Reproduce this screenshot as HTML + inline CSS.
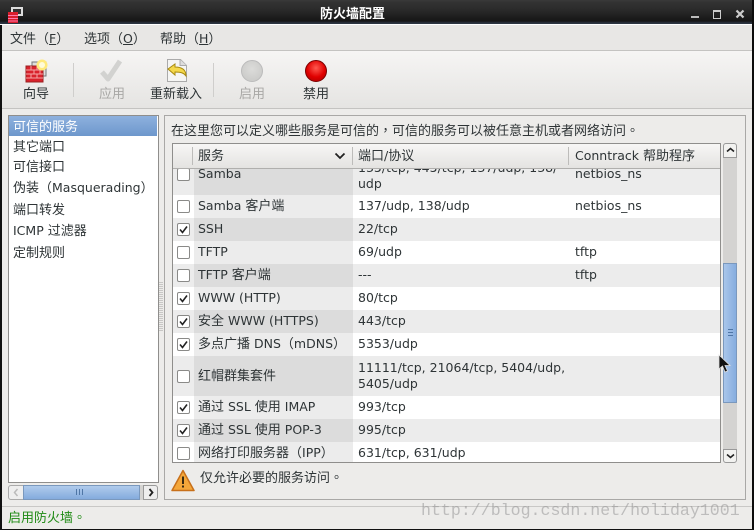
<!DOCTYPE html>
<html><head><meta charset="utf-8">
<style>
html,body{margin:0;padding:0;background:#000}
#w{position:relative;width:754px;height:530px;overflow:hidden;background:#edecea;font-family:"Liberation Sans","DejaVu Sans","WenQuanYi Zen Hei","Noto Sans CJK SC",sans-serif;font-size:13px;color:#2e3436}
.a{position:absolute;white-space:nowrap}
.t{font-family:"DejaVu Sans","WenQuanYi Zen Hei","Noto Sans CJK SC",sans-serif;font-size:12.5px;line-height:16px;white-space:nowrap;position:absolute}
.t i{font-style:normal;font-size:13px}
.t b{font-weight:normal;font-size:13px;font-family:"Noto Sans CJK TC",sans-serif;line-height:16px}
.r{position:absolute;left:173px;width:547px}
.c{position:absolute;left:177px;width:11px;height:11px;border:1px solid #8a8a88;border-radius:2px;background:#fff;font-size:0}
.c svg{position:absolute;left:1px;top:1px}
u{text-decoration:underline}
</style></head><body>
<div id="w">
<!-- title bar -->
<div class="a" style="left:0;top:0;width:754px;height:24px;background:linear-gradient(#3a3a3a 0,#333 2px,#2a2a2a 10px,#161616 21px,#2b3440 23px)"></div>
<div class="a" style="left:0;top:24px;width:754px;height:1px;background:#fff"></div>
<div class="a" style="left:0;top:25px;width:2px;height:505px;background:#111"></div>
<div class="a" style="left:752px;top:0;width:2px;height:530px;background:#0c0c0c"></div>
<div class="a" style="left:0;top:529px;width:754px;height:1px;background:#111"></div>
<svg class="a" style="left:6px;top:6px" width="18" height="18" viewBox="0 0 18 18"><rect x="5" y="1" width="12" height="9" fill="#ddd"/><rect x="7" y="3" width="8" height="5" fill="#333"/><rect x="2" y="6" width="10" height="11" fill="#d81e2c"/><path d="M2 9.500h10M2 12.500h10M2 15h10" stroke="#f7a" stroke-width="1"/></svg>
<div class="t" style="left:320px;top:7px;color:#fff;font-weight:bold;font-size:13px">防火墙配置</div>
<div class="a" style="left:691px;top:16px;width:8px;height:2px;background:#bbb"></div>
<div class="a" style="left:713px;top:10px;width:6px;height:6px;border:1px solid #ccc;border-top-width:2px"></div>
<svg class="a" style="left:735px;top:9px" width="10" height="10"><path d="M1.500 1.500L8.500 8.500M8.500 1.500L1.500 8.500" stroke="#ccc" stroke-width="2.200"/></svg>

<!-- menu -->
<div class="a" style="left:2px;top:25px;width:750px;height:25px;background:#e8e7e5"></div>
<div class="a" style="left:2px;top:50px;width:750px;height:1px;background:#c4c3c1"></div>
<div class="t" style="left:10px;top:31px"><i>文件（</i><u>F</u><i>）</i></div>
<div class="t" style="left:84px;top:31px"><i>选项（</i><u>O</u><i>）</i></div>
<div class="t" style="left:160px;top:31px"><i>帮助（</i><u>H</u><i>）</i></div>

<!-- toolbar -->
<div class="a" style="left:2px;top:51px;width:750px;height:57px;background:linear-gradient(#f6f5f4,#e5e4e2)"></div>
<div class="a" style="left:2px;top:108px;width:750px;height:1px;background:#c4c3c1"></div>
<div class="a" style="left:73px;top:63px;width:1px;height:34px;background:#cfcecc"></div>
<div class="a" style="left:213px;top:63px;width:1px;height:34px;background:#cfcecc"></div>
<svg class="a" style="left:24px;top:58px" width="26" height="26" viewBox="0 0 26 26"><rect x="8" y="4" width="14" height="14" fill="#ddd" stroke="#777"/><rect x="2" y="8" width="17" height="16" fill="#d9222c" stroke="#922"/><path d="M2 12h17M2 16h17M2 20h17M7 8v4M13 8v4M10 12v4M16 12v4M7 16v4M13 16v4" stroke="#f5a5a5"/><circle cx="18" cy="7" r="5.500" fill="#ffe97a"/><circle cx="18" cy="7" r="3" fill="#fffbd8"/></svg>
<div class="t" style="left:23px;top:86px"><i>向导</i></div>
<svg class="a" style="left:97px;top:58px" width="28" height="26" viewBox="0 0 28 26"><path d="M5 14l6 7L23 3" fill="none" stroke="#d2d2d0" stroke-width="5" stroke-linejoin="round"/></svg>
<div class="t" style="left:99px;top:86px;color:#a8a7a5"><i>应用</i></div>
<svg class="a" style="left:165px;top:58px" width="24" height="25" viewBox="0 0 24 25"><path d="M2.500 1.500h13l6 6v16h-19z" fill="#f5f5f3" stroke="#aaa"/><path d="M15 1.500v6h6.500" fill="#ddd" stroke="#aaa"/><path d="M3 11l7-5v3c6 0 11 2 11 9-2-3-5-4-11-4v3z" fill="#f4d84a" stroke="#a88a10"/></svg>
<div class="t" style="left:150px;top:86px"><i>重新载入</i></div>
<div class="a" style="left:241px;top:60px;width:20px;height:20px;border:1px solid #bbb;border-radius:50%;background:radial-gradient(circle at 50% 40%,#dcdcda,#c6c6c4)"></div>
<div class="t" style="left:239px;top:86px;color:#a8a7a5"><i>启用</i></div>
<div class="a" style="left:305px;top:60px;width:20px;height:20px;border:1px solid #7a0000;border-radius:50%;background:radial-gradient(circle at 50% 35%,#ff5a50,#e00000 55%,#a80000)"></div>
<div class="t" style="left:303px;top:86px"><i>禁用</i></div>

<!-- left list -->
<div class="a" style="left:8px;top:115px;width:149px;height:366px;background:#fff;border:1px solid #8f8e8c"></div>
<div class="a" style="left:9px;top:116px;width:148px;height:20px;background:linear-gradient(#8eb1de,#6d97cc)"></div>
<div class="t" style="left:13px;top:119px;color:#fff"><i>可信的服务</i></div>
<div class="t" style="left:13px;top:139px"><i>其它端口</i></div>
<div class="t" style="left:13px;top:159px"><i>可信接口</i></div>
<div class="t" style="left:13px;top:180px"><i>伪装（</i>Masquerading<i>）</i></div>
<div class="t" style="left:13px;top:202px"><i>端口转发</i></div>
<div class="t" style="left:13px;top:223px">ICMP <i>过滤器</i></div>
<div class="t" style="left:13px;top:245px"><i>定制规则</i></div>
<!-- left hscroll -->
<div class="a" style="left:8px;top:485px;width:150px;height:15px;background:#d4d3d1;border-radius:3px"></div>
<div class="a" style="left:8px;top:485px;width:14px;height:13px;border:1px solid #aaa;border-radius:3px 0 0 3px;background:#eee"></div>
<div class="a" style="left:23px;top:485px;width:115px;height:13px;border:1px solid #7a98bd;background:linear-gradient(#b0cbec,#84abdd)"></div>
<div class="a" style="left:143px;top:485px;width:13px;height:13px;border:1px solid #999;border-radius:0 3px 3px 0;background:#eee"></div>
<svg class="a" style="left:12px;top:488px" width="8" height="9"><path d="M5.500 1L2.500 4.500 5.500 8" stroke="#bbb" fill="none" stroke-width="1.500"/></svg>
<svg class="a" style="left:147px;top:488px" width="8" height="9"><path d="M2.500 1L5.500 4.500 2.500 8" stroke="#222" fill="none" stroke-width="1.800"/></svg>
<div class="a" style="left:76px;top:489px;width:7px;height:6px;background:repeating-linear-gradient(90deg,#4f76a6 0 1px,transparent 1px 3px)"></div>
<div class="a" style="left:159px;top:282px;width:4px;height:50px;background:repeating-linear-gradient(#c8c7c5 0 1px,transparent 1px 2px)"></div>

<!-- right frame -->
<div class="a" style="left:164px;top:115px;width:580px;height:383px;border:1px solid #a9a8a6"></div>
<div class="t" style="left:171px;top:122px"><i>在这里您可以定义哪些服务是可信的</i><b>，</b><i>可信的服务可以被任意主机或者网络访问</i><b>。</b></div>

<!-- table -->
<div class="a" style="left:172px;top:143px;width:547px;height:319px;border:1px solid #8f8e8c;background:#fff"></div>
<div class="a" style="left:173px;top:144px;width:547px;height:24px;background:linear-gradient(#f7f6f5,#e4e3e1);z-index:3;border-bottom:1px solid #b0afad"></div>
<div class="a" style="left:192px;top:147px;width:1px;height:18px;background:#bdbcba;z-index:4"></div>
<div class="a" style="left:352px;top:147px;width:1px;height:18px;background:#bdbcba;z-index:4"></div>
<div class="a" style="left:568px;top:147px;width:1px;height:18px;background:#bdbcba;z-index:4"></div>
<div class="t" style="left:198px;top:148px;z-index:4"><i>服务</i></div>
<svg class="a" style="left:334px;top:152px;z-index:4" width="12" height="8"><path d="M1.500 1.500L6 6 10.500 1.500" stroke="#222" fill="none" stroke-width="1.800"/></svg>
<div class="t" style="left:358px;top:148px;z-index:4"><i>端口</i>/<i>协议</i></div>
<div class="t" style="left:575px;top:148px;z-index:4">Conntrack <i>帮助程序</i></div>

<!-- rows -->
<div class="r" style="top:169px;height:26px;background:#ececec"></div><div class="a" style="left:194px;top:169px;width:159px;height:26px;background:#dcdcdc"></div>
<div class="r" style="top:195px;height:23px;background:#fff"></div><div class="a" style="left:194px;top:195px;width:159px;height:23px;background:#ececec"></div>
<div class="r" style="top:218px;height:23px;background:#ececec"></div><div class="a" style="left:194px;top:218px;width:159px;height:23px;background:#dcdcdc"></div>
<div class="r" style="top:241px;height:23px;background:#fff"></div><div class="a" style="left:194px;top:241px;width:159px;height:23px;background:#ececec"></div>
<div class="r" style="top:264px;height:23px;background:#ececec"></div><div class="a" style="left:194px;top:264px;width:159px;height:23px;background:#dcdcdc"></div>
<div class="r" style="top:287px;height:23px;background:#fff"></div><div class="a" style="left:194px;top:287px;width:159px;height:23px;background:#ececec"></div>
<div class="r" style="top:310px;height:23px;background:#ececec"></div><div class="a" style="left:194px;top:310px;width:159px;height:23px;background:#dcdcdc"></div>
<div class="r" style="top:333px;height:23px;background:#fff"></div><div class="a" style="left:194px;top:333px;width:159px;height:23px;background:#ececec"></div>
<div class="r" style="top:356px;height:40px;background:#ececec"></div><div class="a" style="left:194px;top:356px;width:159px;height:40px;background:#dcdcdc"></div>
<div class="r" style="top:396px;height:23px;background:#fff"></div><div class="a" style="left:194px;top:396px;width:159px;height:23px;background:#ececec"></div>
<div class="r" style="top:419px;height:23px;background:#ececec"></div><div class="a" style="left:194px;top:419px;width:159px;height:23px;background:#dcdcdc"></div>
<div class="r" style="top:442px;height:20px;background:#fff"></div><div class="a" style="left:194px;top:442px;width:159px;height:20px;background:#ececec"></div>

<div class="c" style="top:168px"></div>
<div class="c" style="top:200px"></div>
<div class="c" style="top:223px"><svg width="9" height="9"><path d="M1 4.500L3.500 7.500 8 1.500" stroke="#222" fill="none" stroke-width="1.600"/></svg></div>
<div class="c" style="top:246px"></div>
<div class="c" style="top:269px"></div>
<div class="c" style="top:292px"><svg width="9" height="9"><path d="M1 4.500L3.500 7.500 8 1.500" stroke="#222" fill="none" stroke-width="1.600"/></svg></div>
<div class="c" style="top:315px"><svg width="9" height="9"><path d="M1 4.500L3.500 7.500 8 1.500" stroke="#222" fill="none" stroke-width="1.600"/></svg></div>
<div class="c" style="top:338px"><svg width="9" height="9"><path d="M1 4.500L3.500 7.500 8 1.500" stroke="#222" fill="none" stroke-width="1.600"/></svg></div>
<div class="c" style="top:370px"></div>
<div class="c" style="top:401px"><svg width="9" height="9"><path d="M1 4.500L3.500 7.500 8 1.500" stroke="#222" fill="none" stroke-width="1.600"/></svg></div>
<div class="c" style="top:424px"><svg width="9" height="9"><path d="M1 4.500L3.500 7.500 8 1.500" stroke="#222" fill="none" stroke-width="1.600"/></svg></div>
<div class="c" style="top:447px"></div>

<div class="t" style="left:198px;top:166px">Samba</div>
<div class="t" style="left:358px;top:160px">135/tcp, 445/tcp, 137/udp, 138/</div>
<div class="t" style="left:358px;top:176px">udp</div>
<div class="t" style="left:575px;top:166px">netbios_ns</div>
<div class="t" style="left:198px;top:198px">Samba <i>客户端</i></div>
<div class="t" style="left:358px;top:198px">137/udp, 138/udp</div>
<div class="t" style="left:575px;top:198px">netbios_ns</div>
<div class="t" style="left:198px;top:221px">SSH</div>
<div class="t" style="left:358px;top:221px">22/tcp</div>
<div class="t" style="left:198px;top:244px">TFTP</div>
<div class="t" style="left:358px;top:244px">69/udp</div>
<div class="t" style="left:575px;top:244px">tftp</div>
<div class="t" style="left:198px;top:267px">TFTP <i>客户端</i></div>
<div class="t" style="left:358px;top:267px">---</div>
<div class="t" style="left:575px;top:267px">tftp</div>
<div class="t" style="left:198px;top:290px">WWW (HTTP)</div>
<div class="t" style="left:358px;top:290px">80/tcp</div>
<div class="t" style="left:198px;top:313px"><i>安全</i> WWW (HTTPS)</div>
<div class="t" style="left:358px;top:313px">443/tcp</div>
<div class="t" style="left:198px;top:336px"><i>多点广播</i> DNS<i>（</i>mDNS<i>）</i></div>
<div class="t" style="left:358px;top:336px">5353/udp</div>
<div class="t" style="left:198px;top:368px"><i>红帽群集套件</i></div>
<div class="t" style="left:358px;top:360px">11111/tcp, 21064/tcp, 5404/udp,</div>
<div class="t" style="left:358px;top:376px">5405/udp</div>
<div class="t" style="left:198px;top:399px"><i>通过</i> SSL <i>使用</i> IMAP</div>
<div class="t" style="left:358px;top:399px">993/tcp</div>
<div class="t" style="left:198px;top:422px"><i>通过</i> SSL <i>使用</i> POP-3</div>
<div class="t" style="left:358px;top:422px">995/tcp</div>
<div class="t" style="left:198px;top:445px"><i>网络打印服务器（</i>IPP<i>）</i></div>
<div class="t" style="left:358px;top:445px">631/tcp, 631/udp</div>
<div class="a" style="left:172px;top:462px;width:549px;height:1px;background:#8f8e8c;z-index:2"></div>
<div class="a" style="left:172px;top:463px;width:549px;height:6px;background:#edecea;z-index:2"></div>

<!-- vscroll -->
<div class="a" style="left:723px;top:143px;width:14px;height:320px;background:#d4d3d1;border-radius:3px"></div>
<div class="a" style="left:723px;top:143px;width:12px;height:13px;border:1px solid #999;border-radius:3px 3px 0 0;background:#f2f2f0"></div>
<svg class="a" style="left:726px;top:147px" width="9" height="6"><path d="M1 4.500L4.500 1.500 8 4.500" stroke="#222" fill="none" stroke-width="1.600"/></svg>
<div class="a" style="left:723px;top:263px;width:12px;height:138px;border:1px solid #7a98bd;background:linear-gradient(90deg,#a9c6ea,#86addf)"></div>
<div class="a" style="left:728px;top:329px;width:5px;height:7px;background:repeating-linear-gradient(#4f76a6 0 1px,transparent 1px 3px)"></div>
<div class="a" style="left:723px;top:449px;width:12px;height:12px;border:1px solid #999;border-radius:0 0 3px 3px;background:#f2f2f0"></div>
<svg class="a" style="left:726px;top:453px" width="9" height="6"><path d="M1 1.500L4.500 4.500 8 1.500" stroke="#222" fill="none" stroke-width="1.600"/></svg>

<!-- cursor -->
<svg class="a" style="left:717px;top:354px;z-index:6" width="14" height="20" viewBox="0 0 14 20"><path d="M2 1L2 15 5.500 12 8 18 10.500 17 8 11.500 13 11.500Z" fill="#111" stroke="#ddd" stroke-width=".8"/></svg>

<!-- warning -->
<svg class="a" style="left:171px;top:469px" width="24" height="23" viewBox="0 0 24 23"><path d="M12 1.500L23 21.500H1Z" fill="#f4a73a" stroke="#c8701a" stroke-width="1.500" stroke-linejoin="round"/><path d="M12 7.500v7.500" stroke="#3a2a10" stroke-width="2"/><rect x="11" y="16.500" width="2" height="2" fill="#3a2a10"/></svg>
<div class="t" style="left:200px;top:469px"><i>仅允许必要的服务访问</i><b>。</b></div>

<!-- status -->
<div class="a" style="left:2px;top:506px;width:750px;height:1px;background:#c9c8c6"></div>
<div class="t" style="left:8px;top:509px;color:#1f8a14"><i>启用防火墙</i><b>。</b></div>
<div class="a" style="left:421px;top:501px;font-family:'Liberation Mono',monospace;font-size:16.6px;line-height:20px;color:rgba(150,150,150,.55)">http://blog.csdn.net/holiday1001</div>
</div>
</body></html>
